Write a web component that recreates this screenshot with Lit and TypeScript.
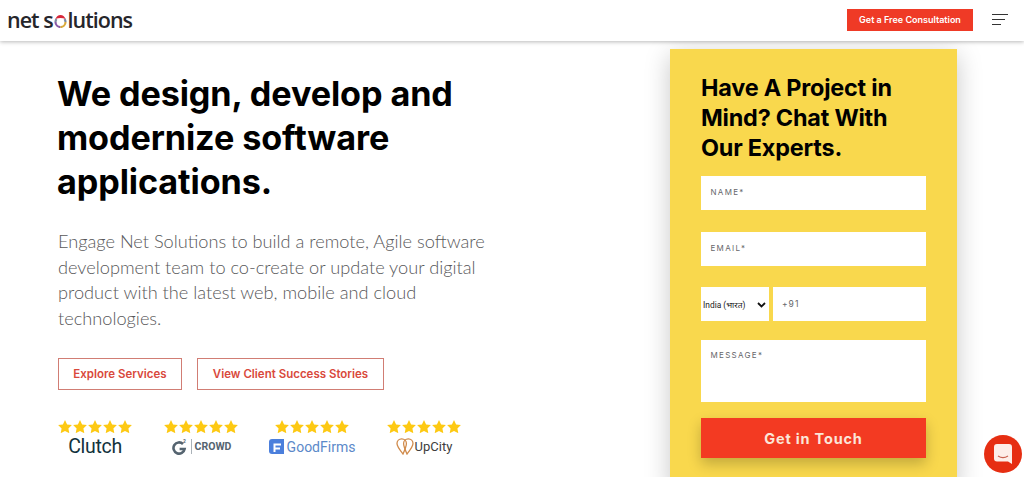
import { LitElement, html, css, svg } from "lit"
import { customElement } from "lit/decorators.js"

const STAR = "M7 0l2.100 4.400 4.800 0.700-3.500 3.300 0.900 4.800-4.300-2.300-4.300 2.300 0.900-4.800-3.500-3.300 4.800-0.700z"

const stars = () => html`<svg class="stars" width="74" height="13" viewBox="0 0 74 13">
  ${[0, 15, 30, 45, 60].map((x) => svg`<path transform="translate(${x} 0)" d=${STAR} fill="#fdc913"></path>`)}
</svg>`

@customElement("app-root")
export class AppRoot extends LitElement {
  static styles = css`
    :host {
      display: block;
      height: 477px;
      overflow: hidden;
      position: relative;
      background: #fff;
      font-family: "Inter", "Liberation Sans", sans-serif;
    }
    header {
      height: 41px;
      box-sizing: border-box;
      display: flex;
      align-items: center;
      padding: 0 16px 2px 7px;
      background: #fff;
      box-shadow: 0 1px 4px rgba(0, 0, 0, 0.28);
      position: relative;
      z-index: 2;
    }
    .logo {
      display: flex;
      align-items: center;
      font: 600 21.500px/1 "Open Sans", sans-serif;
      letter-spacing: -1px;
      color: #26262b;
    }
    .cta {
      margin-left: auto;
      width: 126px;
      height: 22px;
      background: #ef3a26;
      color: #fff;
      font-size: 9px;
      font-weight: 600;
      display: flex;
      align-items: center;
      justify-content: center;
    }
    .burger { margin-left: 19px; display: block; }
    main {
      display: flex;
      padding-left: 58px;
    }
    .left { width: 612px; padding-top: 31px; }
    h1 {
      margin: 0;
      margin-left: -1px;
      font-size: 34.200px;
      line-height: 44px;
      font-weight: 700;
      color: #000;
      letter-spacing: -0.1px;
    }
    .lead {
      margin: 25px 0 0;
      width: 450px;
      font: 300 18.200px/25.700px "Lato", sans-serif;
      color: #58585a;
    }
    .btns { display: flex; gap: 15px; margin-top: 26px; }
    .btn {
      height: 32px;
      border: 1px solid #d17d74;
      color: #d9493c;
      font-size: 11.500px;
      font-weight: 600;
      display: flex;
      align-items: center;
      justify-content: center;
      box-sizing: border-box;
    }
    .b1 { width: 124px; }
    .b2 { width: 187px; }
    .ratings { display: flex; margin-top: 30px; }
    .rating { display: flex; flex-direction: column; align-items: center; width: 74px; margin-right: 32px; }
    .rating:nth-child(2) { margin-right: 37px; }
    .rating:nth-child(3) { margin-right: 38px; }
    .stars { display: block; }
    .brand { height: 20px; margin-top: 4px; display: flex; align-items: center; white-space: nowrap; }
    .clutch { font: 400 19.500px/1 "Roboto", sans-serif; color: #12323c; letter-spacing: -0.300px; }
    .crowd { font: 700 10.500px/1 "Roboto", sans-serif; color: #556470; gap: 3px; }
    .crowd i { display: block; width: 1px; height: 15px; background: #aab2b8; }
    .goodfirms { font: 400 14px/1 "Roboto", sans-serif; color: #5b89c9; gap: 3px; }
    .upcity { font: 400 13px/1 "Roboto", sans-serif; color: #3d3d3d; gap: 1px; }
    .card {
      width: 287px;
      height: 440px;
      margin-top: 8px;
      box-sizing: border-box;
      padding: 24px 31px 0;
      background: #f9d84d;
      box-shadow: 0 6px 24px rgba(0, 0, 0, 0.22);
    }
    h2 {
      margin: 0 0 13px;
      font-size: 23.400px;
      line-height: 30px;
      font-weight: 700;
      color: #000;
      letter-spacing: -0.2px;
    }
    .field {
      background: #fff;
      height: 34px;
      box-sizing: border-box;
      padding: 11px 9.500px 0;
      font-size: 8px;
      line-height: 11px;
      letter-spacing: 1.300px;
      color: #66666a;
    }
    .gap { margin-top: 22px; }
    .phone { display: flex; gap: 4px; margin-top: 21px; }
    .select {
      width: 68px;
      height: 34px;
      background: #fff;
      display: flex;
      align-items: center;
      padding: 1px 0 0 2px;
      box-sizing: border-box;
      font: 8.400px "Roboto", "Noto Sans", "Liberation Sans", sans-serif;
      color: #222;
      white-space: nowrap;
    }
    .select svg { margin-left: auto; margin-right: 3px; }
    .num { flex: 1; padding: 12px 9px 0; letter-spacing: 1px; font-size: 8.500px; }
    .msg { height: 62px; margin-top: 19px; padding-top: 10px; }
    .send {
      height: 40px;
      margin-top: 16px;
      background: #f33a22;
      color: #fbe6d8;
      font-size: 14.500px;
      font-weight: 700;
      letter-spacing: 0.800px;
      display: flex;
      align-items: center;
      justify-content: center;
      box-shadow: 0 6px 14px rgba(0, 0, 0, 0.22);
    }
    .chat {
      position: absolute;
      right: 2px;
      bottom: 4px;
      width: 38px;
      height: 38px;
      border-radius: 50%;
      background: #e62e12;
      display: flex;
      align-items: center;
      justify-content: center;
    }
  `

  render() {
    return html`
      <header>
        <div class="logo">
          net s<svg width="15" height="17" viewBox="0 0 15 17">
            <path d="M2.500 11a5 5 0 0 0 5 5" fill="none" stroke="#8a5aa8" stroke-width="2.200"></path>
            <path d="M7.500 16a5 5 0 0 0 5-5" fill="none" stroke="#d9a93a" stroke-width="2.200"></path>
            <path d="M2.500 11a5 5 0 0 1 1-3M12.500 11a5 5 0 0 0-1-3" fill="none" stroke="#7c8aa0" stroke-width="2.200"></path>
            <path d="M2.500 8a5.500 7 0 0 1 10 0c-3-1.500-7-1.500-10 0z" fill="#d8273a"></path>
          </svg>lutions
        </div>
        <div class="cta">Get a Free Consultation</div>
        <svg class="burger" width="16" height="11" viewBox="0 0 16 11">
          <path d="M0 .5h16M0 5.500h13M0 10.500h9" stroke="#333" stroke-width="1" fill="none"></path>
        </svg>
      </header>
      <main>
        <section class="left">
          <h1>We design, develop and<br />modernize software<br />applications.</h1>
          <p class="lead">
            Engage Net Solutions to build a remote, Agile software development team to co-create or
            update your digital product with the latest web, mobile and cloud technologies.
          </p>
          <div class="btns">
            <div class="btn b1">Explore Services</div>
            <div class="btn b2">View Client Success Stories</div>
          </div>
          <div class="ratings">
            <div class="rating">${stars()}<div class="brand clutch">Clutch</div></div>
            <div class="rating">
              ${stars()}
              <div class="brand crowd">
                <svg width="17" height="17" viewBox="0 0 17 17">
                  <path d="M12 6a5.600 5.600 0 1 0 1.600 5H8.600" fill="none" stroke="#556470" stroke-width="2.600"></path>
                  <text x="12" y="4.500" font-size="5" fill="#556470">2</text>
                </svg><i></i>CROWD
              </div>
            </div>
            <div class="rating">
              ${stars()}
              <div class="brand goodfirms">
                <svg width="15" height="15" viewBox="0 0 15 15">
                  <path d="M3 0h12v15H3a3 3 0 0 1-3-3V3a3 3 0 0 1 3-3z" fill="#4b7fdc"></path>
                  <path d="M5.500 13V5.500h6.500M5.500 9.500h5.500" stroke="#fff" stroke-width="2" fill="none"></path>
                </svg>GoodFirms
              </div>
            </div>
            <div class="rating">
              ${stars()}
              <div class="brand upcity">
                <svg width="18" height="17" viewBox="0 0 18 17">
                  <path d="M7 16C3.500 11.500 1 8.500 1 5.500a4.700 4.700 0 0 1 9.400 0c0 2.500-1.400 6-3.400 10.500z" fill="none" stroke="#d08a4a" stroke-width="1.300"></path>
                  <path d="M11 16c-2-4.500-3.400-8-3.400-10.500a4.700 4.700 0 0 1 9.400 0c0 3-2.500 6-6 10.500z" fill="none" stroke="#d08a4a" stroke-width="1.300"></path>
                </svg>UpCity
              </div>
            </div>
          </div>
        </section>
        <aside class="card">
          <h2>Have A Project in Mind? Chat With Our Experts.</h2>
          <div class="field">NAME*</div>
          <div class="field gap">EMAIL*</div>
          <div class="phone">
            <div class="select">
              India (भारत)
              <svg width="9" height="6" viewBox="0 0 9 6"><path d="M1 1l3.500 3.500L8 1" fill="none" stroke="#111" stroke-width="1.800"></path></svg>
            </div>
            <div class="field num">+91</div>
          </div>
          <div class="field msg">MESSAGE*</div>
          <div class="send">Get in Touch</div>
        </aside>
      </main>
      <div class="chat">
        <svg width="18" height="20" viewBox="0 0 18 20">
          <path d="M3 0h12a3 3 0 0 1 3 3v17l-4-2.500H3a3 3 0 0 1-3-3V3a3 3 0 0 1 3-3z" fill="#fdeee8"></path>
          <path d="M4 12c3 2 7 2 10 0" fill="none" stroke="#c9624f" stroke-width="1.200"></path>
        </svg>
      </div>
    `
  }
}
